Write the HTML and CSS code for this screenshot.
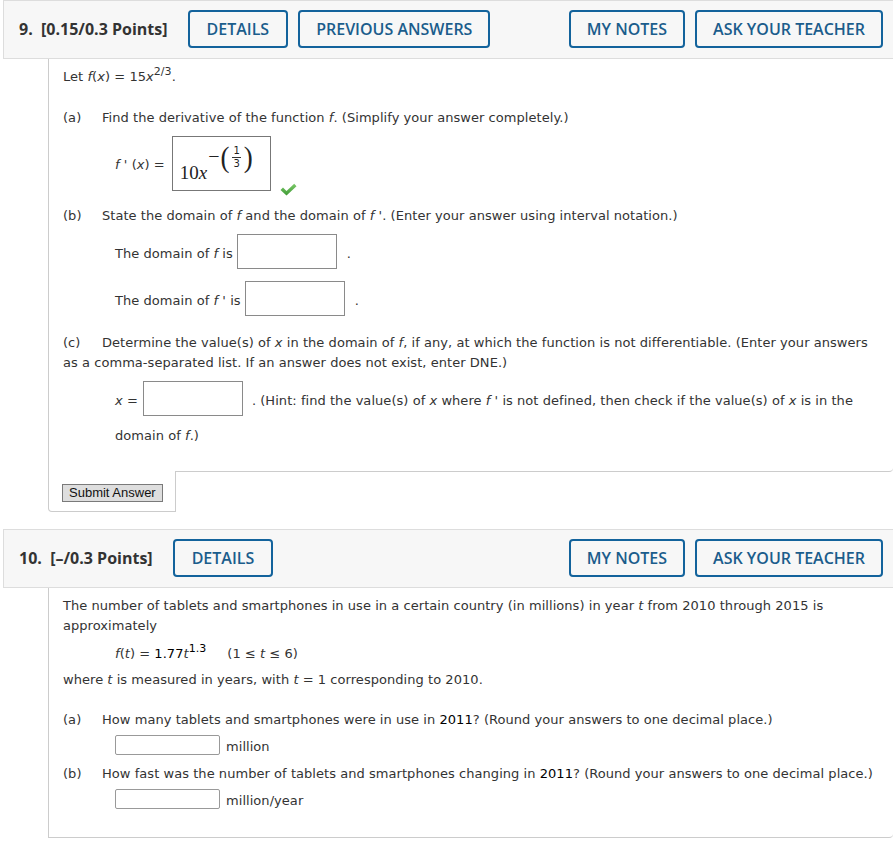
FILE: index.html
```html
<!DOCTYPE html>
<html>
<head>
<meta charset="utf-8">
<title>Questions</title>
<link rel="stylesheet" href="styles.css">
</head>
<body>
<div class="page">
  <section class="question">
    <div class="qhead">
      <div class="qtitle">9.&nbsp; [0.15/0.3 Points]</div>
      <div class="btn wide">DETAILS</div>
      <div class="btn">PREVIOUS ANSWERS</div>
      <div class="spacer"></div>
      <div class="btn">MY NOTES</div>
      <div class="btn">ASK YOUR TEACHER</div>
    </div>
    <div class="qbody q9">
      <p class="ln">Let <i>f</i>(<i>x</i>) = 15<i>x</i><sup>2/3</sup>.</p>
      <p class="ln m21"><span class="part">(a)</span>Find the derivative of the function <i>f</i>. (Simplify your answer completely.)</p>
      <div class="row m9 indent">
        <span class="lbl"><i>f</i> ' (<i>x</i>) =</span>
        <div class="mathbox">
          <span class="mbase">10<i>x</i></span>
          <span class="mexp">
            <span class="mminus">−</span>
            <span class="mparen">(</span>
            <span class="mfrac"><span class="fnum">1</span><span class="fden">3</span></span>
            <span class="mparen">)</span>
          </span>
        </div>
        <svg class="check" width="17" height="13" viewBox="0 0 17 13">
          <defs>
            <linearGradient id="g" x1="0" y1="0" x2="0" y2="1">
              <stop offset="0" stop-color="#7cc96a"/>
              <stop offset="1" stop-color="#3f9a35"/>
            </linearGradient>
          </defs>
          <path d="M0.5 7 L3 4.5 L6.5 8 L14.2 0.8 L16.5 3.2 L6.5 12.5 Z" fill="url(#g)"/>
        </svg>
      </div>
      <p class="ln m14"><span class="part">(b)</span>State the domain of <i>f</i> and the domain of <i>f</i> '. (Enter your answer using interval notation.)</p>
      <div class="row m9 indent">
        <span class="rt">The domain of <i>f</i> is</span>
        <input class="bigbox gap4" type="text">
        <span class="rt dot">.</span>
      </div>
      <div class="row m12 indent">
        <span class="rt">The domain of <i>f</i> ' is</span>
        <input class="bigbox gap4" type="text">
        <span class="rt dot">.</span>
      </div>
      <p class="ln m16"><span class="part">(c)</span>Determine the value(s) of <i>x</i> in the domain of <i>f</i>, if any, at which the function is not differentiable. (Enter your answers<br>as a comma-separated list. If an answer does not exist, enter DNE.)</p>
      <div class="row m9 indent">
        <span class="rt"><i>x</i> =</span>
        <input class="bigbox gap5" type="text">
        <span class="rt hint">. (Hint: find the value(s) of <i>x</i> where <i>f</i> ' is not defined, then check if the value(s) of <i>x</i> is in the</span>
      </div>
      <p class="ln m9 indent">domain of <i>f</i>.)</p>
    </div>
    <div class="submit-tab"><button class="submit" type="button">Submit Answer</button></div>
  </section>

  <section class="question q2">
    <div class="qhead">
      <div class="qtitle">10.&nbsp; [–/0.3 Points]</div>
      <div class="btn wide">DETAILS</div>
      <div class="spacer"></div>
      <div class="btn">MY NOTES</div>
      <div class="btn">ASK YOUR TEACHER</div>
    </div>
    <div class="qbody q10">
      <p class="ln">The number of tablets and smartphones in use in a certain country (in millions) in year <i>t</i> from 2010 through 2015 is<br>approximately</p>
      <p class="ln m8 indent"><i>f</i>(<i>t</i>) = <span class="num">1.77</span><i>t</i><sup class="num">1.3</sup><span class="range">(1 ≤ <i>t</i> ≤ 6)</span></p>
      <p class="ln m6">where <i>t</i> is measured in years, with <i>t</i> = 1 corresponding to 2010.</p>
      <p class="ln m20"><span class="part">(a)</span>How many tablets and smartphones were in use in <span class="num">2011</span>? (Round your answers to one decimal place.)</p>
      <div class="row m6 indent">
        <input class="smallbox" type="text">
        <span class="rt unit">million</span>
      </div>
      <p class="ln m8"><span class="part">(b)</span>How fast was the number of tablets and smartphones changing in <span class="num">2011</span>? (Round your answers to one decimal place.)</p>
      <div class="row m6 indent">
        <input class="smallbox" type="text">
        <span class="rt unit">million/year</span>
      </div>
    </div>
  </section>
</div>
</body>
</html>
```

FILE: styles.css
```css
body {
  margin: 0;
  font-family: "DejaVu Sans", Verdana, sans-serif;
  font-size: 13px;
  letter-spacing: 0.05px;
  color: #333;
  background: #fff;
}

.page {
  margin-left: 3px;
  width: 890px;
}

.q2 {
  margin-top: 17px;
}

.qhead {
  display: flex;
  align-items: center;
  gap: 10px;
  height: 38px;
  padding: 9px 10px 10px 15px;
  background: #f7f7f7;
  border: 1px solid #ddd;
  border-right: none;
  letter-spacing: 0;
}

.qtitle {
  font-family: "Open Sans", sans-serif;
  font-weight: 700;
  font-size: 16px;
  color: #333;
  margin-right: 10px;
  white-space: nowrap;
}

.spacer {
  flex: 1;
}

.btn {
  box-sizing: border-box;
  height: 38px;
  display: flex;
  align-items: center;
  padding: 0 16px;
  border: 2px solid #13639c;
  border-radius: 4px;
  font-family: "Open Sans", sans-serif;
  font-weight: 600;
  font-size: 16px;
  color: #1b5d8c;
  white-space: nowrap;
}

.btn.wide {
  padding: 0 17px;
}

.qbody {
  margin-left: 45px;
  border-left: 1px solid #ccc;
  border-bottom: 1px solid #ccc;
  border-bottom-right-radius: 4px;
  padding: 7px 0 26px 14px;
}

.q10 {
  padding-bottom: 28px;
}

.ln {
  margin: 0 0 -1px;
  padding-top: 1px;
  line-height: 20px;
  white-space: nowrap;
}

.m6 { margin-top: 6px; }
.m8 { margin-top: 8px; }
.m9 { margin-top: 9px; }
.m12 { margin-top: 12px; }
.m14 { margin-top: 14px; }
.m16 { margin-top: 16px; }
.m20 { margin-top: 20px; }
.m21 { margin-top: 21px; }

.indent {
  padding-left: 52px;
}

.part {
  display: inline-block;
  width: 39px;
}

sup {
  font-size: 11px;
  line-height: 0;
  vertical-align: 6px;
}

.num {
  color: #000;
}

.range {
  margin-left: 21px;
}

.row {
  display: flex;
  align-items: center;
  white-space: nowrap;
}

.rt {
  padding-top: 3px;
}

.lbl {
  padding-top: 2px;
  margin-right: 7px;
}

.mathbox {
  box-sizing: border-box;
  width: 99px;
  height: 55px;
  border: 1px solid #777;
  display: flex;
  align-items: flex-start;
  padding-left: 7px;
  color: #222;
  font-family: "Liberation Serif", "Times New Roman", serif;
  letter-spacing: 0;
}

.mbase {
  font-size: 19px;
  line-height: 20px;
  margin-top: 26px;
}

.mexp {
  display: flex;
  align-items: center;
  height: 28px;
  margin-top: 6px;
  margin-left: 1px;
}

.mminus {
  font-size: 20px;
  line-height: 20px;
  margin-top: -3px;
}

.mparen {
  font-size: 27px;
  line-height: 27px;
  transform: scaleY(1.12);
  margin: 0 1px;
}

.mfrac {
  display: flex;
  flex-direction: column;
  align-items: center;
  font-family: "DejaVu Sans", sans-serif;
  font-size: 10px;
  line-height: 10px;
  padding: 0 2px;
}

.fnum {
  border-bottom: 1px solid #333;
  padding: 0 1px 1px;
}

.fden {
  padding-top: 1px;
}

.check {
  align-self: flex-end;
  margin-left: 9px;
  margin-bottom: -5px;
}

.bigbox {
  box-sizing: border-box;
  width: 100px;
  height: 35px;
  margin: 0;
  padding: 0;
  border: 1px solid #8a8a8a;
  border-radius: 0;
  background: #fff;
}

.gap4 { margin-left: 4px; }
.gap5 { margin-left: 5px; }

.dot {
  margin-left: 10px;
}

.hint {
  margin-left: 9px;
}

.smallbox {
  box-sizing: border-box;
  width: 105px;
  height: 20px;
  margin: 0;
  padding: 0;
  border: 1px solid #999;
  border-radius: 2px;
  background: #fff;
}

.unit {
  margin-left: 6px;
}

.submit-tab {
  position: relative;
  box-sizing: border-box;
  width: 128px;
  margin-left: 45px;
  margin-top: -1px;
  padding: 13px 0 9px 13px;
  background: #fff;
  border-left: 1px solid #ccc;
  border-right: 1px solid #ccc;
  border-bottom: 1px solid #ccc;
  border-bottom-left-radius: 4px;
}

.submit {
  display: block;
  height: 18px;
  margin: 0;
  padding: 0 6px;
  font-family: "Liberation Sans", Arial, sans-serif;
  font-size: 13px;
  line-height: 16px;
  letter-spacing: 0;
  color: #111;
  background: #dedede;
  border: 1px solid #7a7a7a;
  border-radius: 0;
}
```
